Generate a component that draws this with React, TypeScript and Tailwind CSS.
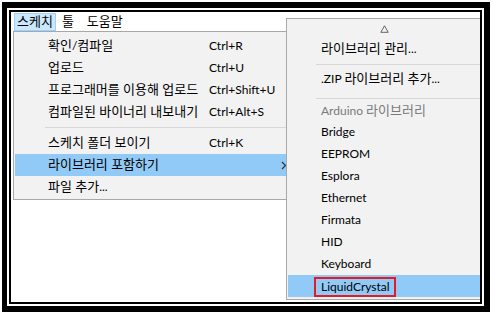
import React from "react";

type Entry = { label: string; shortcut?: string; sub?: boolean; active?: boolean } | "sep";

const sketchMenu: Entry[] = [
  { label: "확인/컴파일", shortcut: "Ctrl+R" },
  { label: "업로드", shortcut: "Ctrl+U" },
  { label: "프로그래머를 이용해 업로드", shortcut: "Ctrl+Shift+U" },
  { label: "컴파일된 바이너리 내보내기", shortcut: "Ctrl+Alt+S" },
  "sep",
  { label: "스케치 폴더 보이기", shortcut: "Ctrl+K" },
  { label: "라이브러리 포함하기", sub: true, active: true },
  { label: "파일 추가..." },
];

const libraries = ["Bridge", "EEPROM", "Esplora", "Ethernet", "Firmata", "HID", "Keyboard"];

// hangul runs are set a bit larger so they match the Windows UI font widths
function T({ children }: { children: string }) {
  const parts = children.split(/([\uac00-\ud7a3]+(?: [\uac00-\ud7a3]+)*)/);
  return (
    <span className="whitespace-pre">
      {parts.map((p, i) =>
        /[\uac00-\ud7a3]/.test(p) ? (
          <span key={i} className="text-[13px]">
            {p}
          </span>
        ) : (
          <React.Fragment key={i}>{p}</React.Fragment>
        )
      )}
    </span>
  );
}

export default function App() {
  return (
    <div className="w-[493px] h-[318px] bg-white pt-[2px] pl-[2px] font-['Lato','Noto_Sans_CJK_KR',sans-serif] text-[12px] text-black">
      {/* double black frame */}
      <div className="w-[488px] h-[310px] border-[6px] border-l-[5px] border-black bg-white p-[2px]">
        <div className="h-full border-2 border-black">
          <div className="relative h-full overflow-hidden bg-white">
            {/* menu bar */}
            <div className="flex h-[19px] pt-[1px] pl-[3px]">
              <div className="flex h-[18px] items-center border border-[#99d1ff] bg-[#cce8ff] px-[2px]">
                <T>스케치</T>
              </div>
              <div className="flex h-[18px] items-center border border-transparent pl-[5px] pr-[4px]">
                <T>툴</T>
              </div>
              <div className="ml-[4px] flex h-[18px] items-center border border-transparent px-[3px]">
                <T>도움말</T>
              </div>
            </div>

            {/* sketch dropdown */}
            <div className="absolute left-[2px] top-[19px] w-[290px] border border-[#a8a8a8] bg-[#f2f2f2] px-[1px] pt-[3px] pb-[1px]">
              {sketchMenu.map((e, i) =>
                e === "sep" ? (
                  <div key={i} className="flex h-[9px] items-center pl-[30px]">
                    <div className="h-px w-full bg-[#d7d7d7]" />
                  </div>
                ) : (
                  <div
                    key={i}
                    className={`flex h-[22px] items-center whitespace-nowrap pl-[33px] ${e.active ? "bg-[#91c9f7]" : ""}`}
                  >
                    <span className="w-[161px] shrink-0">
                      <T>{e.label}</T>
                    </span>
                    {e.shortcut && <span>{e.shortcut}</span>}
                    {e.sub && (
                      <svg className="ml-auto mr-[14px]" width="6" height="9" viewBox="0 0 6 9">
                        <path d="M1 1 L4.5 4.5 L1 8" fill="none" stroke="#333" strokeWidth="1.2" />
                      </svg>
                    )}
                  </div>
                )
              )}
            </div>

            {/* library submenu */}
            <div className="absolute left-[275px] top-[6px] w-[196px] border border-[#a8a8a8] bg-[#f2f2f2] px-[1px] pb-[2px] whitespace-nowrap">
              <div className="flex h-[19px] items-center justify-center">
                <svg width="9" height="8" viewBox="0 0 9 8">
                  <path d="M4.5 0.8 L8.2 7.3 L0.8 7.3 Z" fill="none" stroke="#555" strokeWidth="0.9" />
                </svg>
              </div>
              <div className="flex h-[22px] items-center pl-[33px]">
                <T>라이브러리 관리...</T>
              </div>
              <div className="flex h-[8px] items-center pl-[28px]">
                <div className="h-px w-full bg-[#d7d7d7]" />
              </div>
              <div className="flex h-[22px] items-center pl-[33px]">
                <T>.ZIP 라이브러리 추가...</T>
              </div>
              <div className="flex h-[10px] items-end pb-[1px] pl-[28px]">
                <div className="h-px w-full bg-[#d7d7d7]" />
              </div>
              <div className="flex h-[21px] items-center pl-[33px] text-[#7a7a7a]">
                <T>Arduino 라이브러리</T>
              </div>
              {libraries.map((l) => (
                <div key={l} className="flex h-[22px] items-center pl-[33px]">
                  {l}
                </div>
              ))}
              <div className="flex h-[22px] items-end bg-[#91c9f7] pl-[26px]">
                <span className="flex h-[20px] items-center border-2 border-[#e31c23] pl-[5px] pr-[4px]">LiquidCrystal</span>
              </div>
            </div>
          </div>
        </div>
      </div>
    </div>
  );
}
